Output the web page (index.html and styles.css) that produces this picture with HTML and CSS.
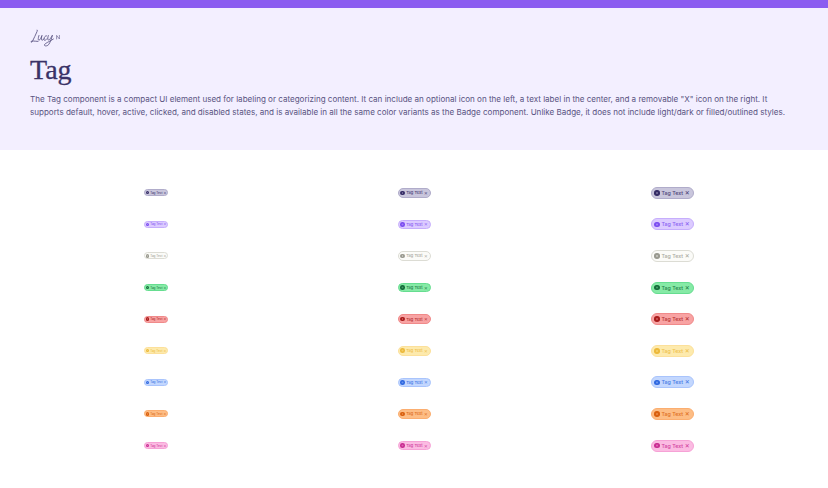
FILE: index.html

```html
<!DOCTYPE html>
<html>
<head>
<title>Tag</title>
<meta name="viewport" content="width=device-width, initial-scale=1.0">
<link rel="stylesheet" href="styles.css">
</head>
<body>

<div class="topbar"></div>

<header class="intro">
    <svg class="logo" viewBox="0 0 32 18" width="32" height="18" fill="none" stroke="#5a5482" stroke-width="0.85" stroke-linecap="round" stroke-linejoin="round">
        <path d="M7 1C7.6 .8 7.6 1.6 7 2.6C5.6 5.4 4 9.6 2.4 12.4C1.8 13.4 .6 13.4 1 12.6C1.6 11.6 4.6 12.2 8 12.4"/>
        <path d="M9 6.4C8.2 8.4 7.8 11.4 9 11.2C10.2 11 11.2 8.4 12 6.4C11.4 8.4 11 11.4 12.2 11.2C13 11 13.6 10.4 14.2 9.6"/>
        <path d="M16.6 6.8C15 6.2 13.6 9.4 14 10.8C14.4 12 16 11 17 9.8"/>
        <path d="M18.4 6.4C17.6 8.4 17.4 11.2 18.6 11C19.8 10.8 21.2 8.4 22.4 6.2C21.6 9.4 20.4 13 18.8 15.4C17.6 17.2 14.4 17.4 14.4 16C14.4 14.6 19 12.8 23.4 10"/>
        <path d="M26.6 10V6.4L29.4 10V6.4" stroke-width="0.6"/>
    </svg>
    <h1>Tag</h1>
    <p>The Tag component is a compact UI element used for labeling or categorizing content. It can include an optional icon on the left, a text label in the center, and a removable "X" icon on the right. It supports default, hover, active, clicked, and disabled states, and is available in all the same color variants as the Badge component. Unlike Badge, it does not include light/dark or filled/outlined styles.</p>
</header>

<main class="grid">
    <span class="tag sm default"><i class="dot"></i>Tag Text<b>×</b></span>
    <span class="tag md default"><i class="dot"></i>Tag Text<b>×</b></span>
    <span class="tag lg default"><i class="dot"></i>Tag Text<b>×</b></span>

    <span class="tag sm purple"><i class="dot"></i>Tag Text<b>×</b></span>
    <span class="tag md purple"><i class="dot"></i>Tag Text<b>×</b></span>
    <span class="tag lg purple"><i class="dot"></i>Tag Text<b>×</b></span>

    <span class="tag sm neutral"><i class="dot"></i>Tag Text<b>×</b></span>
    <span class="tag md neutral"><i class="dot"></i>Tag Text<b>×</b></span>
    <span class="tag lg neutral"><i class="dot"></i>Tag Text<b>×</b></span>

    <span class="tag sm green"><i class="dot"></i>Tag Text<b>×</b></span>
    <span class="tag md green"><i class="dot"></i>Tag Text<b>×</b></span>
    <span class="tag lg green"><i class="dot"></i>Tag Text<b>×</b></span>

    <span class="tag sm red"><i class="dot"></i>Tag Text<b>×</b></span>
    <span class="tag md red"><i class="dot"></i>Tag Text<b>×</b></span>
    <span class="tag lg red"><i class="dot"></i>Tag Text<b>×</b></span>

    <span class="tag sm yellow"><i class="dot"></i>Tag Text<b>×</b></span>
    <span class="tag md yellow"><i class="dot"></i>Tag Text<b>×</b></span>
    <span class="tag lg yellow"><i class="dot"></i>Tag Text<b>×</b></span>

    <span class="tag sm blue"><i class="dot"></i>Tag Text<b>×</b></span>
    <span class="tag md blue"><i class="dot"></i>Tag Text<b>×</b></span>
    <span class="tag lg blue"><i class="dot"></i>Tag Text<b>×</b></span>

    <span class="tag sm orange"><i class="dot"></i>Tag Text<b>×</b></span>
    <span class="tag md orange"><i class="dot"></i>Tag Text<b>×</b></span>
    <span class="tag lg orange"><i class="dot"></i>Tag Text<b>×</b></span>

    <span class="tag sm pink"><i class="dot"></i>Tag Text<b>×</b></span>
    <span class="tag md pink"><i class="dot"></i>Tag Text<b>×</b></span>
    <span class="tag lg pink"><i class="dot"></i>Tag Text<b>×</b></span>
</main>

</body>
</html>
```

FILE: styles.css

```css
html, body { margin: 0; padding: 0; }
body { width: 828px; height: 488px; overflow: hidden; background-color: #fff; font-family: Inter, sans-serif; }

.topbar { height: 8px; background-color: #8b5cf0; }

.intro { height: 142px; box-sizing: border-box; padding: 21px 30px 0; background-color: #f3efff; color: #5a5482; }
.logo { display: block; }
h1 { margin: 6px 0 0; font-family: "Liberation Serif", serif; font-weight: 400; font-size: 28px; line-height: 34px; color: #3a3268; -webkit-text-stroke: 0.3px #3a3268; }
p { margin: 6px 0 0; font-size: 8.05px; line-height: 12.5px; }

.grid { display: grid; grid-template-columns: repeat(3, 258px); grid-auto-rows: 31.6px; padding: 27px 27px 0; justify-items: center; align-items: center; }

.tag { display: inline-flex; align-items: center; justify-content: center; box-sizing: border-box; border: 0.7px solid var(--line); border-radius: 99px; white-space: nowrap; font-weight: 500; color: color-mix(in srgb, var(--ink) 85%, var(--fill)); background-color: var(--fill); }
.tag b { font-weight: 400; font-size: 1.4em; line-height: 0; }
.dot { display: block; border-radius: 50%; background: radial-gradient(circle, color-mix(in srgb, var(--ink) 60%, var(--fill)) 0 15%, var(--ink) 35%); }

.sm { width: 24px; height: 7px; font-size: 3px; gap: 1px; }
.sm .dot { width: 3.4px; height: 3.4px; }
.md { width: 33px; height: 9.5px; font-size: 4px; gap: 1.3px; }
.md .dot { width: 4.6px; height: 4.6px; }
.lg { width: 43px; height: 12px; font-size: 5.3px; gap: 1.6px; }
.lg .dot { width: 5.6px; height: 5.6px; }

.default { --ink: #352c66; --fill: #c9c6dc; --line: #b0acca; }
.purple { --ink: #7c4df0; --fill: #dccbff; --line: #c6aefc; }
.neutral { --ink: #9a9a90; --fill: #fbfbf8; --line: #dcdcd4; }
.green { --ink: #146c3a; --fill: #86eaa6; --line: #66dd90; }
.red { --ink: #a81c1c; --fill: #f8a3a3; --line: #f08a8a; }
.yellow { --ink: #ecb93a; --fill: #fdeaad; --line: #fce09a; }
.blue { --ink: #2f68e0; --fill: #c3d7fe; --line: #a9c4fc; }
.orange { --ink: #d9600f; --fill: #fdbd85; --line: #fbae70; }
.pink { --ink: #c92c92; --fill: #fbbbe2; --line: #f6a2d6; }
```
